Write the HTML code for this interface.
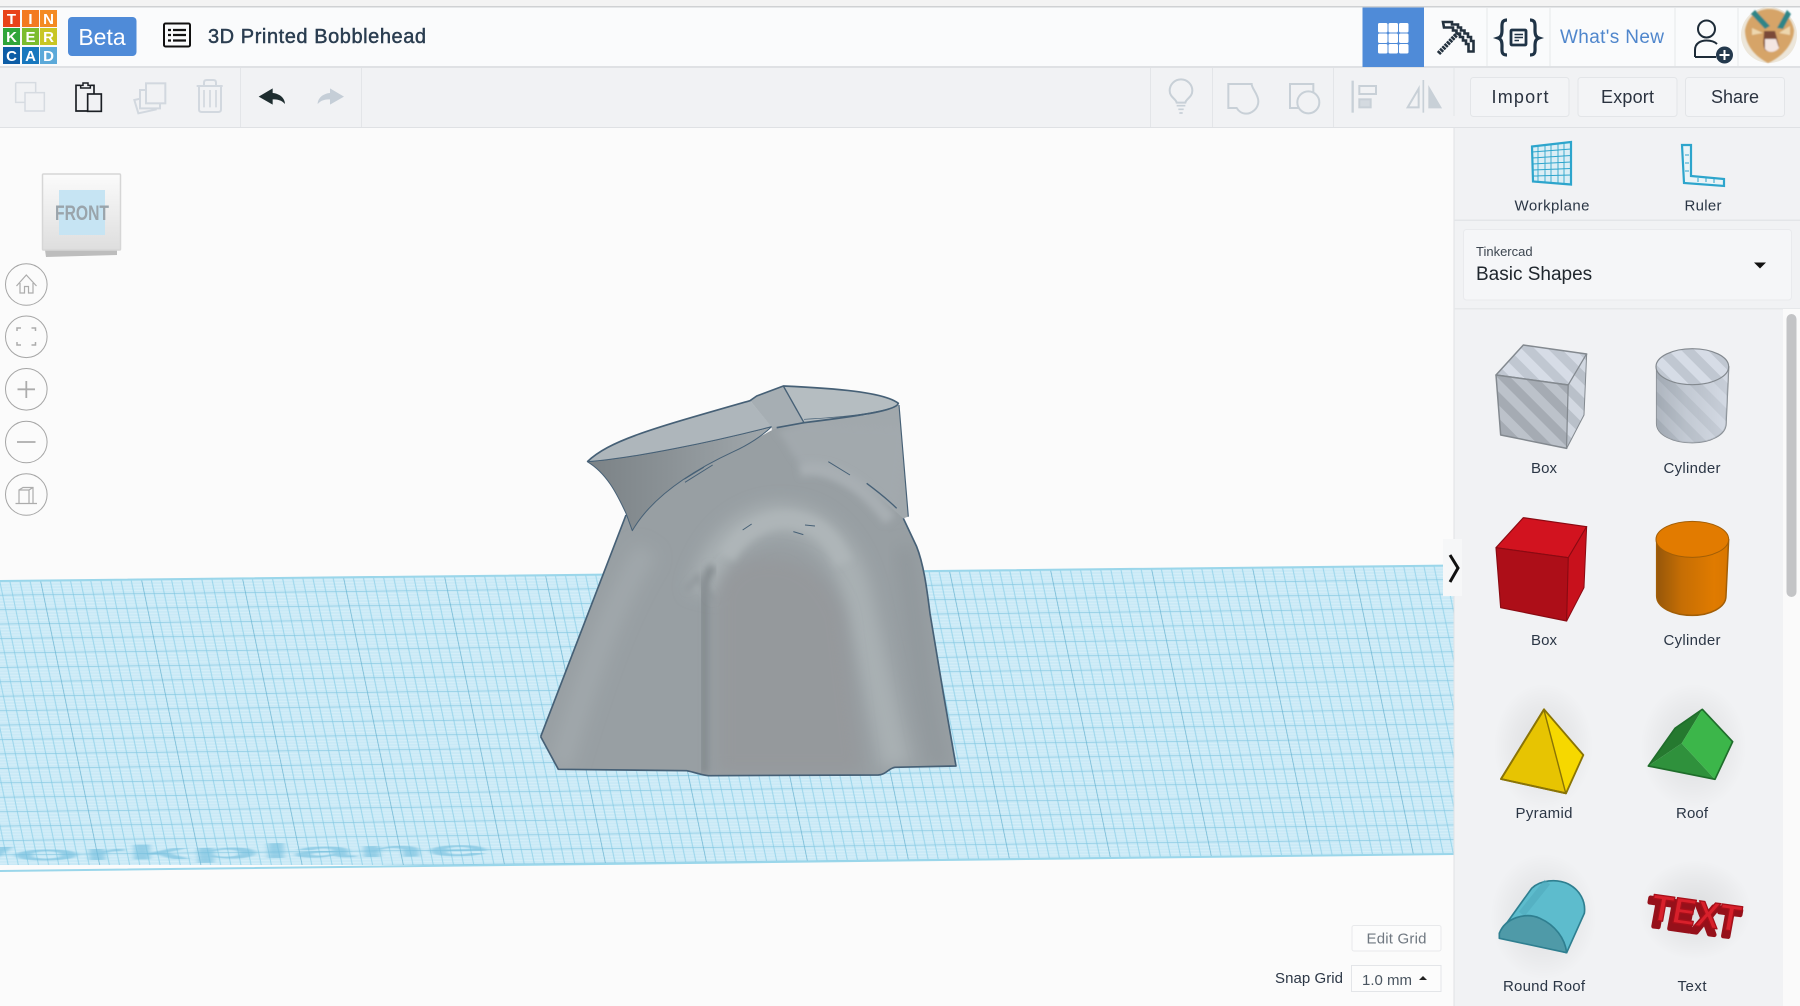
<!DOCTYPE html>
<html><head><meta charset="utf-8"><title>3D Printed Bobblehead</title>
<style>html,body{margin:0;padding:0;background:#fbfbfb;width:1800px;height:1006px;overflow:hidden}svg{display:block}text{font-family:"Liberation Sans",sans-serif}</style></head>
<body>
<svg xmlns="http://www.w3.org/2000/svg" width="1800" height="1006" viewBox="0 0 1800 1006">
<defs>
<pattern id="g" patternUnits="userSpaceOnUse" width="101" height="14.4" patternTransform="matrix(1 -0.0107 0.208 1 40 580)">
<rect width="101" height="14.4" fill="#c9e9f6"/>
<g stroke="#d9f0f9" stroke-width=".8"><path d="M0 2.88H101M0 5.76H101M0 8.64H101M0 11.52H101"/></g>
<g stroke="#98d5eb" stroke-width="1"><path d="M10.1 0V14.4M20.2 0V14.4M30.3 0V14.4M40.4 0V14.4M50.5 0V14.4M60.6 0V14.4M70.7 0V14.4M80.8 0V14.4M90.9 0V14.4"/></g>
<path d="M0 0H101" stroke="#82c6e0" stroke-width="1.300"/>
<path d="M0 0V14.4" stroke="#6cb6d3" stroke-width="1.500"/>
</pattern>
<clipPath id="wp"><path d="M0 581L1454 565.5V854L0 871Z"/></clipPath>
<pattern id="s1" patternUnits="userSpaceOnUse" width="56" height="56" patternTransform="rotate(-45)"><rect width="56" height="56" fill="#d6dce6"/><rect width="28" height="56" fill="#c0c7d1"/></pattern>
<pattern id="s2" patternUnits="userSpaceOnUse" width="56" height="56" patternTransform="rotate(-45)"><rect width="56" height="56" fill="#bcc2ca"/><rect width="28" height="56" fill="#a5abb3"/></pattern>
<pattern id="s3" patternUnits="userSpaceOnUse" width="56" height="56" patternTransform="rotate(-45)"><rect width="56" height="56" fill="#d2d8e1"/><rect width="28" height="56" fill="#b9c0c9"/></pattern>
<linearGradient id="cy" x1="0" x2="1" y1="0" y2="0"><stop offset="0" stop-color="#7d868f"/><stop offset=".4" stop-color="#aab2bb"/><stop offset="1" stop-color="#d2d8e2"/></linearGradient>
<linearGradient id="or" x1="0" x2="1" y1="0" y2="0"><stop offset="0" stop-color="#96570a"/><stop offset=".35" stop-color="#c66e04"/><stop offset=".8" stop-color="#e07b00"/><stop offset="1" stop-color="#d87600"/></linearGradient>
<linearGradient id="cb" x1="0" x2="0" y1="0" y2="1"><stop offset="0" stop-color="#fbfbfb"/><stop offset="1" stop-color="#dedede"/></linearGradient>
<radialGradient id="sh"><stop offset="0" stop-color="#000" stop-opacity=".09"/><stop offset=".65" stop-color="#000" stop-opacity=".035"/><stop offset="1" stop-color="#000" stop-opacity="0"/></radialGradient>
<linearGradient id="fl" x1="0" x2="1" y1="0" y2="0"><stop offset="0" stop-color="#7b8286"/><stop offset=".45" stop-color="#8b9296"/><stop offset="1" stop-color="#a1a8ac"/></linearGradient>
<filter id="b6" x="-30%" y="-30%" width="160%" height="160%"><feGaussianBlur stdDeviation="10"/></filter>
<filter id="b12" x="-40%" y="-40%" width="180%" height="180%"><feGaussianBlur stdDeviation="24"/></filter>
<filter id="b1" x="-10%" y="-100%" width="120%" height="300%"><feGaussianBlur stdDeviation="2.500 1"/></filter>
<filter id="b05" x="-10%" y="-10%" width="120%" height="120%"><feGaussianBlur stdDeviation=".8"/></filter>
<clipPath id="bd"><path d="M122 1130L378 465L397 512C450 420 560 340 700 275C760 245 800 215 830 205L912 188L1197 135L1225 470L1210 475L1250 560C1270 610 1280 680 1290 760L1330 1000L1368 1218L1185 1222C1165 1225 1160 1243 1135 1245L625 1247C600 1245 590 1238 560 1232L175 1228Z"/></clipPath>
</defs>

<rect width="1800" height="1006" fill="#fbfbfb"/>

<!-- workplane -->
<rect width="1454" height="300" y="565" fill="url(#g)" clip-path="url(#wp)"/>
<g clip-path="url(#wp)"><text transform="translate(-95 862) rotate(-.6) scale(1.115 .2)" font-size="103" font-weight="700" fill="#6fbcdc" opacity=".6" filter="url(#b1)">Workplane</text></g>
<path d="M0 581L1454 565.5M0 871L1454 854" stroke="#9ad6ea" stroke-width="2" fill="none"/>

<!-- top strip + header -->
<rect width="1800" height="6" fill="#f3f3f3"/>
<rect y="6" width="1800" height="1.500" fill="#cfd1d3"/>
<rect y="7.500" width="1800" height="59.500" fill="#fafbfc"/>
<rect y="67" width="1800" height="60" fill="#f1f2f4"/>
<rect y="66" width="1800" height="2" fill="#dfe1e4"/>
<rect y="127" width="1800" height="1" fill="#dfe1e4"/>

<!-- logo -->
<g font-size="15" font-weight="700" fill="#fff" text-anchor="middle">
<rect x="3" y="10" width="17" height="17" fill="#e8431a"/><rect x="22" y="10" width="17" height="17" fill="#f37a20"/><rect x="40" y="10" width="17" height="17" fill="#f48a22"/>
<rect x="3" y="28" width="17" height="17" fill="#2fa53a"/><rect x="22" y="28" width="17" height="17" fill="#7cbc2e"/><rect x="40" y="28" width="17" height="17" fill="#c8c624"/>
<rect x="3" y="47" width="17" height="17" fill="#0d5da6"/><rect x="22" y="47" width="17" height="17" fill="#1878be"/><rect x="40" y="47" width="17" height="17" fill="#5ba9d9"/>
<text x="11.500" y="24">T</text><text x="30.500" y="24">I</text><text x="48.500" y="24">N</text>
<text x="11.500" y="42">K</text><text x="30.500" y="42">E</text><text x="48.500" y="42">R</text>
<text x="11.500" y="61">C</text><text x="30.500" y="61">A</text><text x="48.500" y="61">D</text>
</g>
<rect x="68" y="17" width="68.500" height="39" rx="4" fill="#4f8bd8"/>
<text x="102" y="45" font-size="23" fill="#fff" text-anchor="middle">Beta</text>
<!-- list icon -->
<rect x="164" y="23.500" width="26" height="23" rx="1.500" fill="none" stroke="#111" stroke-width="2"/>
<path d="M173 30H186M173 35H186M173 40.500H186" stroke="#111" stroke-width="2.200"/>
<path d="M168 30H171M168 35H171M168 40.500H171" stroke="#111" stroke-width="2.200"/>
<text x="208" y="43" font-size="20" fill="#2a3d50" stroke="#2a3d50" stroke-width=".45" textLength="218">3D Printed Bobblehead</text>

<!-- left toolbar icons (zoom coords) -->
<g transform="scale(.33333)" fill="none">
<g stroke="#d6dbe1" stroke-width="4.500"><path d="M47 248H107V278M47 248V307H75"/><rect x="75" y="278" width="58" height="55"/></g>
<g stroke="#1b1f24" stroke-width="5"><path d="M240 256H228V333H277V310M273 256H282V282"/><rect x="263" y="282" width="41" height="52" fill="#f1f2f4"/><path d="M242 264V256H249V249H264V256H271V264Z" fill="#f1f2f4" stroke-width="4.500"/></g>
<g stroke="#d2d8df" stroke-width="6"><rect x="438" y="250" width="58" height="60"/><path d="M438 270H420V325H480V310M420 296L403 300L415 340L470 328"/></g>
<g stroke="#d2d8df" stroke-width="6"><path d="M590 258H668M597 258V328Q597 336 605 336H655Q663 336 663 328V258M612 258V248Q612 240 620 240H640Q648 240 648 248V258"/><path d="M612 270V322M630 270V322M648 270V322" stroke-width="5"/></g>
</g>
<g transform="scale(.33333)">
<path d="M776 290L818 265V279C840 281 855 295 855 312C845 300 832 298 818 298V314Z" fill="#1e2d2f"/>
<path d="M1032 290L990 265V279C968 281 953 295 953 312C963 300 976 298 990 298V314Z" fill="#c5ced7"/>
</g>
<path d="M240.500 68V127M361.500 68V127M1150.500 68V127M1212.500 68V127M1333.500 68V127M1454 68V116" stroke="#e3e5e8" stroke-width="1"/>

<!-- right toolbar icons (zoom12 coords) -->
<g transform="translate(1150 68) scale(.33333)" fill="none" stroke="#c8d0d7" stroke-width="6">
<path d="M80 104C78 92 59 88 59 68A34 34 0 0 1 127 68C127 88 108 92 106 104Z"/><path d="M80 113H106M85 124H101M88 135H98" stroke-width="5"/>
<path d="M235 48H305C305 62 325 78 325 100C325 122 305 137 288 137C275 137 265 128 260 120H235Z"/>
<path d="M420 48H490V120H420Z"/><circle cx="475" cy="103" r="33" fill="#f1f2f4"/>
<path d="M608 38V134" stroke-width="7"/><rect x="628" y="54" width="50" height="24"/><rect x="628" y="94" width="34" height="24" fill="#d4dae0" />
<path d="M820 36V134" stroke-width="5"/><path d="M806 62V118H773Z"/><path d="M838 62V118H871Z" fill="#c8d0d7"/>
</g>

<!-- buttons -->
<g fill="#f3f4f6" stroke="#e3e5e8"><rect x="1470.500" y="77.500" width="98.500" height="39" rx="3"/><rect x="1578" y="77.500" width="99" height="39" rx="3"/><rect x="1685.500" y="77.500" width="99" height="39" rx="3"/></g>
<g font-size="18" fill="#2b3340" text-anchor="middle"><text x="1520" y="103" textLength="57">Import</text><text x="1627.500" y="103" textLength="53">Export</text><text x="1735" y="103" textLength="48">Share</text></g>

<!-- header right -->
<rect x="1362.500" y="7.500" width="61.500" height="59.500" fill="#4f8bd8"/>
<g fill="#fff"><rect x="1378" y="23" width="9.500" height="9.500" rx="1.500"/><rect x="1388.500" y="23" width="9.500" height="9.500" rx="1.500"/><rect x="1399" y="23" width="9.500" height="9.500" rx="1.500"/><rect x="1378" y="33.500" width="9.500" height="9.500" rx="1.500"/><rect x="1388.500" y="33.500" width="9.500" height="9.500" rx="1.500"/><rect x="1399" y="33.500" width="9.500" height="9.500" rx="1.500"/><rect x="1378" y="44" width="9.500" height="9.500" rx="1.500"/><rect x="1388.500" y="44" width="9.500" height="9.500" rx="1.500"/><rect x="1399" y="44" width="9.500" height="9.500" rx="1.500"/></g>
<path d="M1487 8V66M1550 8V66M1675 8V66M1738 8V66" stroke="#e6e8ea" stroke-width="1"/>
<!-- pickaxe -->
<g fill="none" stroke="#24323f" stroke-width="2.600" stroke-linejoin="miter">
<path d="M1443 22H1452V24.500H1458V27.500H1461V30.500H1464.500V33.500H1468V37H1471V41H1473.500V51.500H1468.500V44H1466V40.500H1463V37H1460V33.500H1456.500V30.500H1453V27.500H1444Z"/>
<path d="M1438.500 53.500L1458 33" stroke-dasharray="2.500 .8" stroke-width="4.500"/>
</g>
<!-- code icon -->
<g fill="none" stroke="#1f3346" stroke-width="3.200">
<path d="M1507 20C1501 20 1502 25 1502 30C1502 35 1501 37 1498 38C1501 39 1502 41 1502 46C1502 51 1501 55 1507 55"/>
<path d="M1530 20C1536 20 1535 25 1535 30C1535 35 1536 37 1539 38C1536 39 1535 41 1535 46C1535 51 1536 55 1530 55"/>
<rect x="1511" y="30" width="15" height="15" rx="1" stroke-width="2.800"/><path d="M1514.500 34.500H1523M1514.500 37.500H1523M1514.500 40.500H1519" stroke-width="1.400"/>
</g>
<text x="1560" y="43" font-size="19" fill="#4f86cc" textLength="104">What's New</text>
<!-- person -->
<g fill="none" stroke="#1d2b38" stroke-width="2"><circle cx="1706.500" cy="29" r="8.500"/><path d="M1695 57V50C1695 43 1701 40.500 1706.500 40.500C1712 40.500 1715 42 1717 44M1695 57H1716"/></g>
<circle cx="1724.500" cy="55" r="8.500" fill="#24394d"/><path d="M1719.500 55H1729.500M1724.500 50V60" stroke="#fff" stroke-width="2"/>
<!-- avatar -->
<circle cx="1769" cy="35" r="28" fill="#ece6da"/>
<g filter="url(#b05)">
<path d="M1745 30C1748 14 1760 9 1769 9C1780 9 1791 15 1794 30C1794 42 1784 56 1768 63C1754 56 1745 44 1745 30Z" fill="#d6a468"/>
<path d="M1755 10L1770 26L1765 29L1751 14ZM1787 10L1777 28L1783 29L1791 14Z" fill="#2e8587"/>
<path d="M1752 28L1763 33L1752 35ZM1790 26L1779 33L1790 35Z" fill="#edd7ae"/>
<path d="M1764 31H1775L1779 46C1778 51 1770 53 1765 50C1762 44 1764 38 1764 31Z" fill="#7a4a38"/>
<path d="M1765 39H1776L1779 48C1775 53 1768 53 1765 49Z" fill="#f4e6e2"/>
</g>

<!-- right panel -->
<rect x="1454" y="128" width="346" height="878" fill="#f1f2f4"/>
<rect x="1453.500" y="128" width="1" height="878" fill="#e0e2e5"/>
<rect x="1454" y="219.500" width="346" height="1.500" fill="#e3e5e8"/>
<rect x="1454" y="308" width="346" height="1.500" fill="#e6e8ea"/>
<rect x="1783" y="309" width="17" height="697" fill="#fafafa"/>
<rect x="1786.500" y="314" width="10" height="283" rx="5" fill="#c3c4c6"/>
<rect x="1463.500" y="229.500" width="328" height="70.500" rx="3" fill="#f5f6f8" stroke="#e9eaed"/>
<text x="1476" y="256" font-size="13" fill="#3d4650">Tinkercad</text>
<text x="1476" y="280" font-size="19" fill="#20272e">Basic Shapes</text>
<path d="M1754 262.500H1766L1760 268.500Z" fill="#111"/>
<!-- workplane icon -->
<g fill="none" stroke="#2da5cc">
<path d="M1532 146.500L1571 142V184.500L1533 181.500Z" stroke-width="2.200" fill="#dbeef5"/>
<path d="M1538 146V182M1545 145.500V182.500M1551 144.500V183M1558 144V183.500M1564 143V184M1532 152L1571 149M1532 158L1571 155.500M1532 164L1571 162M1533 170L1571 168.500M1533 176L1571 175" stroke-width=".9"/>
</g>
<!-- ruler -->
<path d="M1682 145H1691V176L1724 179V186L1684 183Z" fill="#eaf4f7" stroke="#2da5cc" stroke-width="2.200"/>
<path d="M1685 155H1689M1685 163H1689M1685 171H1689M1698 178V182M1706 178V182M1714 179V183" stroke="#2da5cc" stroke-width="1"/>
<g font-size="15" fill="#2b3645" text-anchor="middle">
<text x="1552" y="210.500" textLength="75">Workplane</text><text x="1703" y="210.500" textLength="37">Ruler</text>
<text x="1544" y="473" textLength="26">Box</text><text x="1692" y="473" textLength="57">Cylinder</text>
<text x="1544" y="645" textLength="26">Box</text><text x="1692" y="645" textLength="57">Cylinder</text>
<text x="1544" y="818" textLength="57">Pyramid</text><text x="1692" y="818" textLength="32">Roof</text>
<text x="1544" y="991" textLength="82">Round Roof</text><text x="1692" y="991" textLength="29">Text</text>
</g>

<!-- shapes row 1-2 -->
<g transform="translate(1440 320) scale(.33333)" stroke-linejoin="round">
<g stroke="#83898f" stroke-width="4.500">
<path d="M250 75L440 102L385 195L168 165Z" fill="url(#s1)"/>
<path d="M168 165L385 195L380 385L182 345Z" fill="url(#s2)"/>
<path d="M440 102L385 195L380 385L432 285Z" fill="url(#s3)" stroke-width="3"/>
<path d="M650 140V310C650 345 700 368 757 368C810 368 858 345 858 310L866 140Z" fill="url(#cy)"/>
<path d="M650 140V310C650 345 700 368 757 368C810 368 858 345 858 310L866 140Z" fill="url(#s1)" fill-opacity=".55" stroke="none"/>
<ellipse cx="757" cy="140" rx="109" ry="54" fill="url(#s1)" stroke-width="3.500"/>
</g>
<g stroke="#8a0a12" stroke-width="4.500">
<path d="M250 593L440 620L385 713L168 683Z" fill="#d2131f" stroke-width="3.500"/>
<path d="M168 683L385 713L380 903L182 863Z" fill="#ad0e18" stroke-width="3.500"/>
<path d="M440 620L385 713L380 903L432 803Z" fill="#c8111c" stroke-width="3"/>
</g>
<g stroke="#a25e06" stroke-width="4.500">
<path d="M650 658V828C650 863 700 886 757 886C810 886 858 863 858 828L866 658Z" fill="url(#or)"/>
<ellipse cx="757" cy="658" rx="109" ry="54" fill="#e27b00" stroke-width="3"/>
</g>
</g>

<!-- shapes row 3-4 -->
<g transform="translate(1440 660) scale(.33333)" stroke-linejoin="round">
<ellipse cx="310" cy="260" rx="150" ry="190" fill="url(#sh)"/>
<ellipse cx="760" cy="260" rx="160" ry="190" fill="url(#sh)"/>
<ellipse cx="310" cy="770" rx="160" ry="190" fill="url(#sh)"/>
<ellipse cx="765" cy="750" rx="170" ry="150" fill="url(#sh)"/>
<g stroke="#8a7406" stroke-width="5.500"><path d="M312 148L183 357L378 400Z" fill="#e7c402"/><path d="M312 148L430 285L378 400Z" fill="#f6d800" stroke-width="3"/><path d="M312 148L183 357L378 400L430 285Z" fill="none"/></g>
<g stroke="#1f6d2b" stroke-width="5">
<path d="M787 148L705 205L625 318L725 250Z" fill="#25792f" stroke="none"/>
<path d="M625 318L725 250L825 358Z" fill="#2f913c" stroke="none"/>
<path d="M787 148L878 245L825 358L725 250Z" fill="#3cb64a" stroke="none"/>
<path d="M787 148L878 245L825 358L625 318L705 205Z" fill="none"/>
</g>
<path d="M178 820L275 685C300 660 350 655 385 672C420 690 438 725 433 760L380 878Z" fill="#5dbccd" stroke="#2f7f90" stroke-width="5"/>
<path d="M322 666L245 762" stroke="#4fa9bb" stroke-width="22" opacity=".55"/>
<path d="M178 820C195 775 255 755 300 775C345 795 375 835 380 878L178 835Z" fill="#4f9aa8" stroke="#2f7f90" stroke-width="5"/>
<text transform="translate(615 795) skewY(8) skewX(-10)" font-size="122" font-weight="700" fill="#96101a" textLength="275" lengthAdjust="spacingAndGlyphs" stroke="#96101a" stroke-width="14">TEXT</text>
<text transform="translate(628 778) skewY(8) skewX(-10)" font-size="112" font-weight="700" fill="#d8202b" textLength="268" lengthAdjust="spacingAndGlyphs" stroke="#a70f19" stroke-width="4">TEXT</text>
</g>

<!-- collapse tab -->
<rect x="1443" y="539" width="19" height="57" fill="#f6f7f8"/>
<path d="M1450 555L1458 568L1450 582" fill="none" stroke="#111" stroke-width="3"/>

<!-- grid controls -->
<rect x="1352" y="925.500" width="89" height="25.500" rx="2" fill="#fcfcfc" stroke="#e8e9eb"/>
<text x="1396.500" y="943.500" font-size="15" fill="#6f7780" text-anchor="middle" textLength="60">Edit Grid</text>
<text x="1275" y="983" font-size="15" fill="#2b3645" textLength="68">Snap Grid</text>
<rect x="1351.500" y="965.500" width="89.500" height="26" fill="#fcfcfc" stroke="#e3e5e8"/>
<text x="1362" y="985" font-size="15" fill="#4a5560" textLength="50">1.0 mm</text>
<path d="M1419 980L1423 976L1427 980Z" fill="#222"/>

<!-- view cube -->
<path d="M45 250H117L117 255L46 257Z" fill="#bdbdbd"/>
<rect x="42.500" y="174" width="78" height="76" rx="1" fill="url(#cb)" stroke="#d6d6d6" stroke-width="1.500"/>
<rect x="59" y="190" width="46" height="45" fill="#c6e4f3"/>
<text x="55" y="220" font-size="21" font-weight="700" fill="#9aa4ab" textLength="54" lengthAdjust="spacingAndGlyphs">FRONT</text>

<!-- nav buttons -->
<g fill="#fbfbfb" stroke="#a5a5a5" stroke-width="1">
<circle cx="26.300" cy="284.500" r="20.800"/><circle cx="26.300" cy="336.800" r="20.800"/><circle cx="26.300" cy="389.300" r="20.800"/><circle cx="26.300" cy="442" r="20.800"/><circle cx="26.300" cy="494.500" r="20.800"/>
</g>
<g fill="none" stroke="#acacac" stroke-width="1.200">
<path d="M16.500 286L26.300 275L36.500 286M20 283V293H24.500V286.500H28.500V293H33V283"/>
<path d="M17 331V328H21M31.500 328H35.500V331M17 342V345H21M31.500 345H35.500V342" stroke-width="1.500"/>
<path d="M17.500 389.300H35M26.300 381V398" stroke-width="1.800"/>
<path d="M17 442H35.500" stroke-width="1.800"/>
<path d="M15.500 503.500H37M19 503V490L23 487.500H33V503M19 490H29L33 487.500M29 490V503"/>
</g>

<!-- bobblehead -->
<g transform="translate(500 360) scale(.33333)" stroke-linejoin="round">
<path d="M815 200L912 188L1100 165L1197 135L1225 470L1210 475L820 420Z" fill="#a1a8ac"/>
<path d="M122 1130L378 465L397 512C450 420 560 340 700 275C760 245 800 215 830 205L900 200L1210 475L1250 560C1270 610 1280 680 1290 760L1330 1000L1368 1218L1185 1222C1165 1225 1160 1243 1135 1245L625 1247C600 1245 590 1238 560 1232L175 1228Z" fill="#989fa3"/>
<g clip-path="url(#bd)">
<path d="M830 215C860 240 870 280 900 310L1190 440L1220 200L900 190Z" fill="#a2a9ad" filter="url(#b6)"/>
<path d="M610 700C650 540 760 470 850 475C950 480 1040 560 1075 720L1190 1220" fill="none" stroke="#a9b0b3" stroke-width="90" filter="url(#b12)"/>
<path d="M650 1240V720C650 640 720 590 800 590C900 590 980 630 1030 760L1090 1240Z" fill="#95999c" filter="url(#b12)"/>
<path d="M680 590C730 500 820 470 880 480C950 490 1000 530 1030 610" fill="none" stroke="#aeb5b8" stroke-width="50" filter="url(#b6)"/>
<path d="M900 330C1000 310 1090 380 1170 480" fill="none" stroke="#a8afb3" stroke-width="40" filter="url(#b6)"/>
<path d="M1210 560C1240 700 1260 1000 1320 1220" fill="none" stroke="#91989c" stroke-width="55" filter="url(#b12)"/>
<path d="M612 1240V700C612 670 622 640 640 620" fill="none" stroke="#848b8f" stroke-width="26" filter="url(#b6)"/>
<path d="M180 1220C260 950 340 720 440 570" fill="none" stroke="#a0a7ab" stroke-width="70" filter="url(#b12)"/>
<path d="M590 650L640 720M560 690L600 640" stroke="#8a9195" stroke-width="10" filter="url(#b6)"/>
</g>
<path d="M262 305C320 340 350 400 378 460L397 512C450 420 560 340 700 275C745 255 790 225 815 200C640 245 400 295 262 305Z" fill="url(#fl)" stroke="#466076" stroke-width="3"/>
<path d="M262 305C330 240 460 205 750 122L815 200C640 245 400 295 262 305Z" fill="#aeb6bb"/>
<path d="M750 122L770 108L850 78L912 188L825 200L815 201Z" fill="#a6aeb3"/>
<path d="M850 78C1000 85 1150 95 1195 130C1190 150 1100 165 912 188Z" fill="#b5bdc1"/>
<g fill="none" stroke="#466076" stroke-width="5">
<path d="M262 305C330 240 460 205 750 122L770 108L850 78C1000 85 1150 95 1195 130C1190 150 1100 165 912 188L830 203"/>
<path d="M850 78L912 188" stroke-width="4"/><path d="M262 305C400 295 640 245 815 200" stroke-width="3"/>
<path d="M912 178C1060 170 1150 155 1190 138" stroke-width="2"/>
<path d="M1197 135L1225 470" stroke-width="3.500"/>
<path d="M1100 370C1140 400 1165 420 1190 445" stroke-width="4"/>
<path d="M122 1130L378 465M122 1130L175 1228L560 1232C590 1238 600 1245 625 1247L1135 1245C1160 1243 1165 1225 1185 1222L1368 1218L1330 1000L1290 760C1280 680 1270 610 1250 560L1210 475"/>
<path d="M555 367L638 315M985 305L1050 345M728 510L755 492M915 495L945 498M880 515L910 524" stroke-width="3"/>
<path d="M553 358L612 322" stroke-width="2"/>
</g>
</g>
</svg>
</body></html>
